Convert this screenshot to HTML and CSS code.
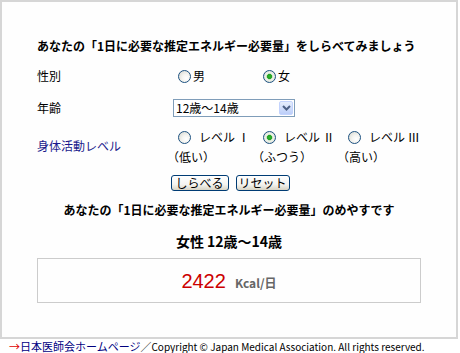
FILE: index.html
```html
<!DOCTYPE html>
<html lang="ja">
<head>
<meta charset="utf-8">
<title>推定エネルギー必要量</title>
<link rel="stylesheet" href="styles.css">
</head>
<body>
<div class="panel">
  <p class="title">あなたの「1日に必要な推定エネルギー必要量」をしらべてみましょう</p>
  <div class="row gender">
    <span class="label">性別</span>
    <label class="opt"><input type="radio" name="sex">男</label>
    <label class="opt"><input type="radio" name="sex" checked>女</label>
  </div>
  <div class="row age">
    <span class="label">年齢</span>
    <div class="select">
      <span class="sel-text">12歳～14歳</span>
      <span class="sel-btn"><svg width="9" height="6" viewBox="0 0 9 6"><path d="M1 1 L4.5 4.5 L8 1" fill="none" stroke="#4d6185" stroke-width="2"/></svg></span>
    </div>
  </div>
  <div class="row level">
    <span class="label level-label">身体活動レベル</span>
    <label class="opt lv"><input type="radio" name="lv">レベル Ⅰ</label>
    <label class="opt lv"><input type="radio" name="lv" checked>レベル Ⅱ</label>
    <label class="opt lv"><input type="radio" name="lv">レベル Ⅲ</label>
    <span class="note">（低い）</span>
    <span class="note">（ふつう）</span>
    <span class="note">（高い）</span>
  </div>
  <div class="buttons">
    <button class="btn btn-check" type="button">しらべる</button>
    <button class="btn btn-reset" type="button">リセット</button>
  </div>
  <p class="result-title">あなたの「1日に必要な推定エネルギー必要量」のめやすです</p>
  <p class="result-sub">女性 12歳～14歳</p>
  <div class="result-box">
    <span class="kcal">2422</span>
    <span class="unit">Kcal/日</span>
  </div>
</div>
<div class="footer"><span class="arrow">→</span><a class="home" href="#">日本医師会ホームページ</a>／<span class="copy">Copyright © Japan Medical Association. All rights reserved.</span></div>
</body>
</html>
```
FILE: styles.css
```css
html, body {
  margin: 0;
  padding: 0;
  background: #ffffff;
}
body {
  font-family: "Noto Sans CJK JP", "Liberation Sans", sans-serif;
  font-size: 12px;
  color: #000;
  width: 460px;
}
.panel {
  box-sizing: border-box;
  width: 458px;
  height: 339px;
  border: 2px solid #d6d6d6;
  background: #fefefe;
  padding-top: 36px;
}
.title {
  margin: 0;
  padding-left: 35px;
  font-weight: bold;
  line-height: 16px;
  height: 16px;
}
.row {
  display: grid;
  grid-template-columns: 136px 85px 85px 85px;
  padding-left: 35px;
  align-items: center;
}
.gender {
  height: 24px;
  margin-top: 10px;
}
.age {
  height: 24px;
  margin-top: 8px;
}
.level {
  grid-template-rows: 20px 20px;
  margin-top: 7px;
}
.label {
  line-height: 16px;
}
.level-label {
  grid-row: 1 / span 2;
  grid-column: 1;
  color: #1a1a8c;
  margin-top: -2px;
}
.opt {
  display: flex;
  align-items: center;
  line-height: 16px;
  white-space: nowrap;
}
.opt input {
  -webkit-appearance: none;
  appearance: none;
  box-sizing: border-box;
  width: 13px;
  height: 13px;
  margin: 0 2px 0 5px;
  border: 1px solid #1c5180;
  border-radius: 50%;
  background: radial-gradient(circle at 65% 65%, #ffffff 0%, #f4f4f0 40%, #d4d4cc 100%);
}
.opt input:checked {
  background: radial-gradient(circle, #2fb52f 0, #21a121 2.2px, #b6e0b0 2.8px, #eef2ea 3.5px, #d8d8d0 100%);
}
.opt.lv input {
  margin-right: 8px;
}
.note {
  grid-row: 2;
  line-height: 16px;
  margin-left: -6px;
}
.select {
  grid-column: 2 / span 3;
  justify-self: start;
  box-sizing: border-box;
  width: 122px;
  height: 18px;
  border: 1px solid #7f9db9;
  background: #fff;
  display: flex;
  align-items: center;
  justify-content: space-between;
  padding: 0 1px 0 2px;
}
.sel-text {
  line-height: 16px;
}
.sel-btn {
  box-sizing: border-box;
  width: 14px;
  height: 14px;
  border: 1px solid #c3d3fd;
  border-radius: 2px;
  background: linear-gradient(#e6eefc, #bccef9);
  display: flex;
  align-items: center;
  justify-content: center;
}
.buttons {
  display: flex;
  justify-content: center;
  gap: 7px;
  margin-top: 8px;
  padding-left: 2px;
}
.btn {
  box-sizing: border-box;
  height: 16px;
  padding: 0;
  border: 1px solid #003c74;
  border-radius: 3px;
  background: linear-gradient(#ffffff 0%, #f4f4f0 60%, #d8d4c4 100%);
  font-family: "Noto Sans CJK JP", sans-serif;
  font-size: 12px;
  line-height: 14px;
  color: #000;
}
.btn-check { width: 58px; }
.btn-reset { width: 54px; }
.result-title {
  margin: 11px 0 0;
  text-align: center;
  font-weight: bold;
  line-height: 16px;
}
.result-sub {
  margin: 14px 0 0;
  text-align: center;
  font-weight: bold;
  font-size: 14px;
  line-height: 18px;
}
.result-box {
  box-sizing: border-box;
  width: 384px;
  height: 45px;
  margin: 8px auto 0;
  border: 1px solid #cccccc;
  display: flex;
  justify-content: center;
  align-items: baseline;
  padding-top: 11px;
  gap: 9px;
}
.kcal {
  font-family: "Liberation Sans", sans-serif;
  font-size: 20px;
  line-height: 22px;
  color: #cc0000;
}
.unit {
  font-weight: bold;
  color: #666666;
  font-size: 12px;
}
.footer {
  padding-left: 9px;
  font-size: 11px;
  line-height: 14px;
  white-space: nowrap;
}
.copy {
  font-size: 10px;
}
.arrow {
  color: #e00000;
}
.home {
  color: #00007f;
  text-decoration: none;
}
```
